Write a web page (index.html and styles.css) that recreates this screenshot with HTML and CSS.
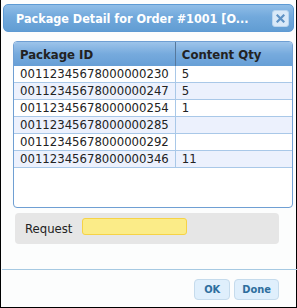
FILE: index.html
```html
<!DOCTYPE html>
<html lang="en">
<head>
  <meta charset="UTF-8">
  <title>Package Detail</title>
  <link rel="stylesheet" href="styles.css">
</head>
<body>
  <div class="dialog">
    <div class="titlebar">
      <span class="title">Package Detail for Order #1001 [O...</span>
      <span class="close">
        <svg width="9" height="9" viewBox="0 0 9 9"><path d="M1.5 1.5 L7.5 7.5 M7.5 1.5 L1.5 7.5" stroke="#5f92c4" stroke-width="2.2" stroke-linecap="square"/></svg>
      </span>
    </div>
    <div class="content">
      <div class="grid">
        <table>
          <thead>
            <tr><th class="col-id">Package ID</th><th class="col-qty">Content Qty</th></tr>
          </thead>
          <tbody>
            <tr><td>00112345678000000230</td><td>5</td></tr>
            <tr class="alt"><td>00112345678000000247</td><td>5</td></tr>
            <tr><td>00112345678000000254</td><td>1</td></tr>
            <tr class="alt"><td>00112345678000000285</td><td></td></tr>
            <tr><td>00112345678000000292</td><td></td></tr>
            <tr class="alt"><td>00112345678000000346</td><td>11</td></tr>
          </tbody>
        </table>
      </div>
      <div class="request">
        <label for="request">Request</label>
        <input type="text" id="request">
      </div>
    </div>
    <div class="buttons">
      <button type="button" class="ok">OK</button>
      <button type="button">Done</button>
    </div>
  </div>
</body>
</html>
```

FILE: styles.css
```css
body {
  margin: 0;
  background-color: #fff;
  font-family: "DejaVu Sans Condensed", "DejaVu Sans", sans-serif;
  font-stretch: condensed;
  color: #222;
}
.dialog {
  box-sizing: border-box;
  width: 297px;
  height: 308px;
  border: 1px solid #000;
  border-top: none;
  padding-top: 4px;
  background-color: #fcfdfd;
  display: flex;
  flex-direction: column;
}
.titlebar {
  margin: 0 2px;
  height: 28px;
  box-sizing: border-box;
  border: 1px solid #5d9ad3;
  border-radius: 5px;
  background: linear-gradient(#8fbde7, #72a9dc 45%, #619dd3);
  display: flex;
  align-items: center;
  justify-content: space-between;
  padding: 0 4px 0 12px;
}
.title {
  color: #fff;
  font-weight: bold;
  font-size: 12.5px;
  white-space: nowrap;
}
.close {
  width: 17px;
  height: 17px;
  box-sizing: border-box;
  border: 1px solid #b9d4ee;
  border-radius: 3px;
  background-color: #d9e9f8;
  display: flex;
  align-items: center;
  justify-content: center;
}
.content {
  flex: 1;
  padding: 9px 3px 0 12px;
}
.grid {
  height: 167px;
  box-sizing: border-box;
  border: 1px solid #6f9fd3;
  border-radius: 4px;
  background-color: #fff;
  overflow: hidden;
}
.grid table {
  width: 100%;
  border-collapse: collapse;
  font-size: 13px;
}
.grid th {
  height: 24px;
  padding: 0 6px;
  text-align: left;
  font-weight: bold;
  color: #222;
  background: linear-gradient(#9dc4ea, #76aadd 50%, #679fd6);
}
.grid th.col-id {
  width: 147px;
  border-right: 1px solid #56789c;
}
.grid td {
  height: 16px;
  padding: 0 6px;
  border-bottom: 1px solid #a9c8e8;
  line-height: 16px;
}
.grid td:first-child {
  border-right: 1px solid #a9c8e8;
}
.grid tr.alt td {
  background-color: #ecf1fd;
}
.request {
  margin: 5px 14px 0 2px;
  height: 31px;
  border-radius: 4px;
  background-color: #e6e6e6;
  display: flex;
  align-items: center;
  padding-left: 10px;
  gap: 10px;
  font-size: 13px;
}
.request input {
  width: 105px;
  height: 17px;
  box-sizing: border-box;
  border: 1px solid #f6d346;
  border-radius: 3px;
  background-color: #fbec88;
  margin-top: -4px;
}
.buttons {
  border-top: 1px solid #a6c9e2;
  margin: 0 -1px 0 1px;
  height: 37px;
  display: flex;
  justify-content: flex-end;
  align-items: center;
  gap: 4px;
  padding-right: 18px;
}
.buttons button {
  height: 21px;
  padding: 0 7px;
  border: 1px solid #c5dbec;
  border-radius: 4px;
  background-color: #dfeffc;
  color: #2e6e9e;
  font-family: "DejaVu Sans Condensed", "DejaVu Sans", sans-serif;
  font-weight: bold;
  font-size: 11px;
  margin-top: 1px;
}
.buttons button.ok {
  min-width: 36px;
}
```
